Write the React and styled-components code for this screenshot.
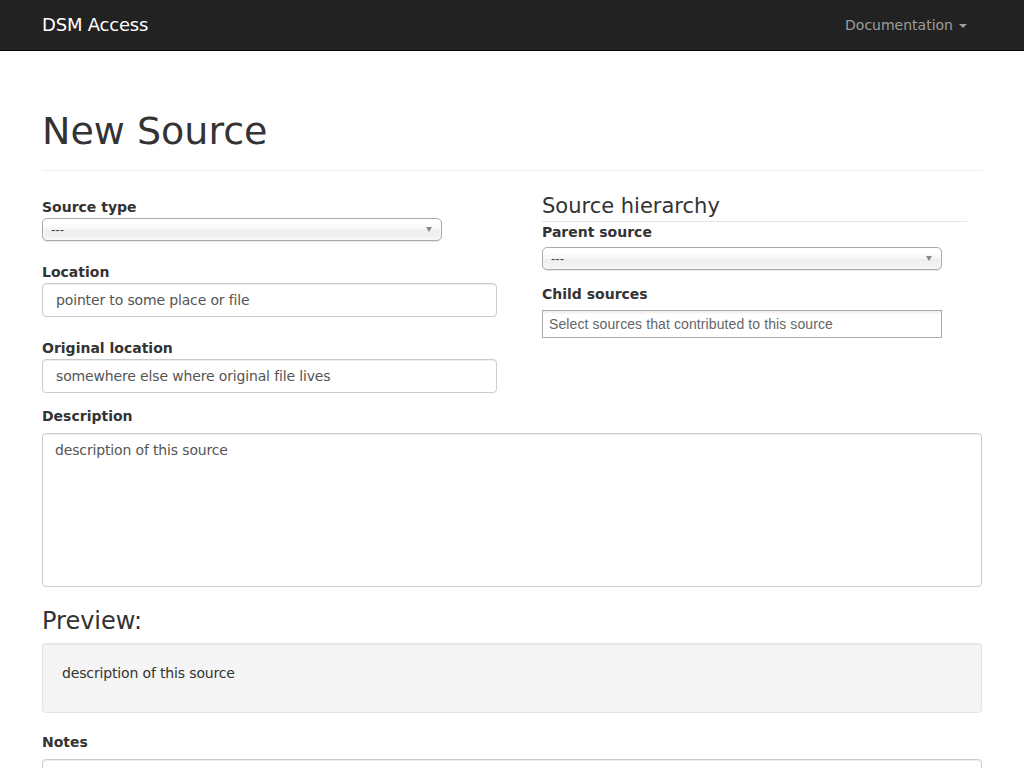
import React from "react";
import styled, { createGlobalStyle } from "styled-components";

const Global = createGlobalStyle`
  html, body { margin: 0; padding: 0; background: #fff; }
  body {
    font-family: "DejaVu Sans", sans-serif;
    font-size: 14px;
    line-height: 20px;
    color: #333;
  }
  * { box-sizing: border-box; }
`;

const Navbar = styled.nav`
  height: 51px;
  background: #222;
  border-bottom: 1px solid #080808;
`;

const NavInner = styled.div`
  width: 940px;
  margin: 0 auto;
  height: 50px;
  display: flex;
  align-items: center;
  justify-content: space-between;
`;

const Brand = styled.a`
  font-size: 18px;
  line-height: 20px;
  color: #fff;
  text-decoration: none;
  letter-spacing: -0.2px;
`;

const NavLink = styled.a`
  font-size: 14px;
  line-height: 20px;
  color: #9d9d9d;
  text-decoration: none;
  padding-right: 15px;
  display: flex;
  align-items: center;
  gap: 6px;
`;

const Caret = styled.span`
  display: inline-block;
  width: 0;
  height: 0;
  border-top: 4px solid #9d9d9d;
  border-left: 4px solid transparent;
  border-right: 4px solid transparent;
  margin-top: 1px;
`;

const Container = styled.main`
  width: 940px;
  margin: 0 auto;
`;

const PageHeader = styled.header`
  margin-top: 59px;
  padding-bottom: 18px;
  border-bottom: 1px solid #eee;
  margin-bottom: 20px;
`;

const Title = styled.h1`
  margin: 0;
  font-size: 38px;
  line-height: 42px;
  font-weight: normal;
  color: #333;
`;

const Row = styled.div`
  display: grid;
  grid-template-columns: 455px 1fr;
  column-gap: 45px;
  align-items: start;
`;

const Column = styled.div`
  display: flex;
  flex-direction: column;
  padding-top: ${(p) => p.$top || 0}px;
`;

const Group = styled.div`
  display: flex;
  flex-direction: column;
  align-items: flex-start;
  margin-bottom: ${(p) => p.$mb ?? 21}px;
`;

const Label = styled.label`
  font-weight: bold;
  font-size: 14px;
  line-height: 20px;
  color: #333;
  margin-bottom: ${(p) => p.$mb ?? 1}px;
`;

const Legend = styled.div`
  width: 425px;
  font-size: 21px;
  line-height: 30px;
  color: #333;
  border-bottom: 1px solid #e5e5e5;
`;

const ChosenSingle = styled.div`
  width: 400px;
  height: 23px;
  border: 1px solid #aaa;
  border-radius: 5px;
  background: linear-gradient(#fff 20%, #f6f6f6 50%, #eee 52%, #f4f4f4 100%);
  box-shadow: inset 0 0 3px #fff, 0 1px 1px rgba(0, 0, 0, 0.1);
  font-family: "Liberation Sans", Arial, sans-serif;
  font-size: 13px;
  line-height: 22px;
  color: #444;
  padding-left: 8px;
  display: flex;
  align-items: center;
  justify-content: space-between;
`;

const SelArrow = styled.span`
  width: 0;
  height: 0;
  border-top: 5px solid #888;
  border-left: 3.5px solid transparent;
  border-right: 3.5px solid transparent;
  margin-right: 9px;
`;

const ChosenMulti = styled.div`
  width: 400px;
  height: 28px;
  border: 1px solid #aaa;
  background: linear-gradient(#eee 1%, #fff 15%);
  font-family: "Liberation Sans", Arial, sans-serif;
  font-size: 14px;
  line-height: 27px;
  color: #666;
  padding-left: 6px;
  letter-spacing: 0.1px;
`;

const TextInput = styled.input`
  width: 455px;
  height: 34px;
  padding: 6px 13px;
  border: 1px solid #ccc;
  border-radius: 4px;
  box-shadow: inset 0 1px 1px rgba(0, 0, 0, 0.075);
  font-family: "DejaVu Sans", sans-serif;
  font-size: 14px;
  line-height: 20px;
  color: #555;
  background: #fff;
  letter-spacing: -0.15px;
  &::placeholder { color: #555; opacity: 1; }
`;

const TextArea = styled.textarea`
  display: block;
  width: 940px;
  height: ${(p) => p.$h}px;
  padding: 6px 12px;
  border: 1px solid #ccc;
  border-radius: 4px;
  box-shadow: inset 0 1px 1px rgba(0, 0, 0, 0.075);
  font-family: "DejaVu Sans", sans-serif;
  font-size: 14px;
  line-height: 20px;
  color: #555;
  resize: none;
  background: #fff;
  letter-spacing: -0.15px;
  &::placeholder { color: #555; opacity: 1; }
`;

const Section = styled.section`
  margin-top: ${(p) => p.$mt || 0}px;
  display: flex;
  flex-direction: column;
`;

const SubTitle = styled.h3`
  margin: 20px 0 8px;
  font-size: 24px;
  line-height: 28px;
  font-weight: normal;
  color: #333;
`;

const Well = styled.div`
  background: #f5f5f5;
  border: 1px solid #e3e3e3;
  border-radius: 4px;
  box-shadow: inset 0 1px 1px rgba(0, 0, 0, 0.05);
  padding: 19px;
  margin-bottom: 19px;
  color: #333;
  letter-spacing: -0.15px;
  p { margin: 0 0 10px; }
`;

export default function App() {
  return (
    <>
      <Global />
      <Navbar>
        <NavInner>
          <Brand href="#">DSM Access</Brand>
          <NavLink href="#">
            Documentation <Caret />
          </NavLink>
        </NavInner>
      </Navbar>
      <Container>
        <PageHeader>
          <Title>New Source</Title>
        </PageHeader>
        <Row>
          <Column $top={6}>
            <Group>
              <Label>Source type</Label>
              <ChosenSingle>
                <span>---</span>
                <SelArrow />
              </ChosenSingle>
            </Group>
            <Group>
              <Label>Location</Label>
              <TextInput placeholder="pointer to some place or file" />
            </Group>
            <Group $mb={0}>
              <Label>Original location</Label>
              <TextInput placeholder="somewhere else where original file lives" />
            </Group>
          </Column>
          <Column>
            <Legend>Source hierarchy</Legend>
            <Group $mb={14}>
              <Label $mb={5}>Parent source</Label>
              <ChosenSingle>
                <span>---</span>
                <SelArrow />
              </ChosenSingle>
            </Group>
            <Group $mb={0}>
              <Label $mb={6}>Child sources</Label>
              <ChosenMulti>Select sources that contributed to this source</ChosenMulti>
            </Group>
          </Column>
        </Row>
        <Section $mt={13}>
          <Label $mb={7}>Description</Label>
          <TextArea $h={154} placeholder="description of this source" />
          <SubTitle>Preview:</SubTitle>
          <Well>
            <p>description of this source</p>
          </Well>
          <Label $mb={7}>Notes</Label>
          <TextArea $h={120} />
        </Section>
      </Container>
    </>
  );
}
